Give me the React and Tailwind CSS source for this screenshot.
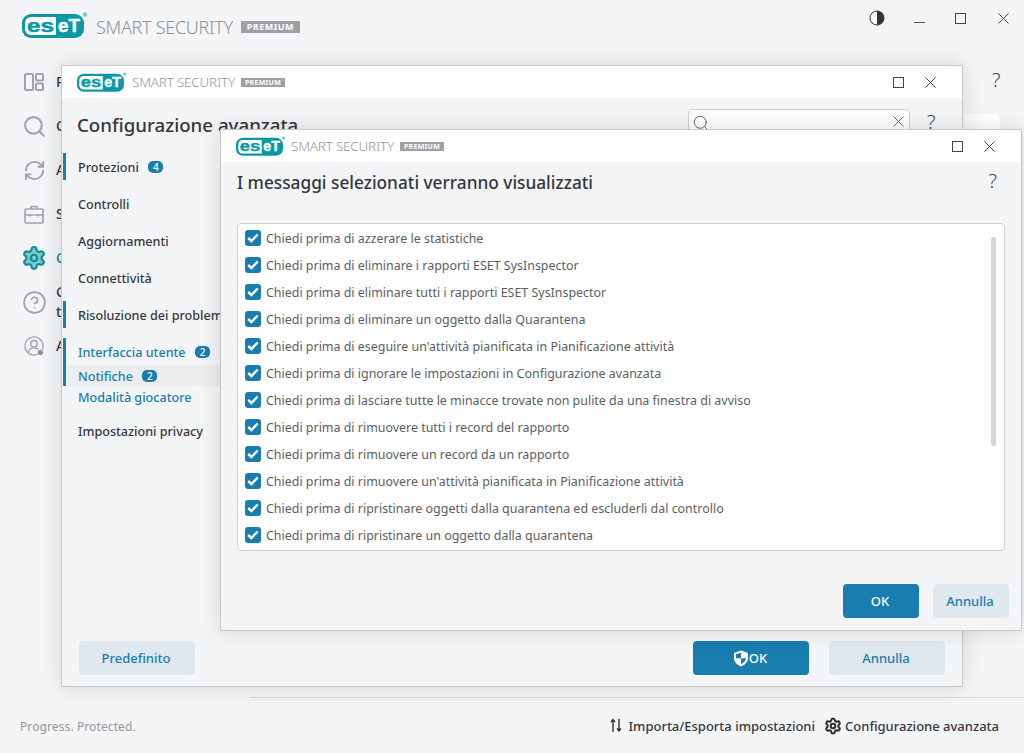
import { RefreshCw, Search, CircleHelp, Settings } from 'lucide-react';

const TEAL = '#0a99a3';

const messages = [
  'Chiedi prima di azzerare le statistiche',
  'Chiedi prima di eliminare i rapporti ESET SysInspector',
  'Chiedi prima di eliminare tutti i rapporti ESET SysInspector',
  'Chiedi prima di eliminare un oggetto dalla Quarantena',
  "Chiedi prima di eseguire un'attività pianificata in Pianificazione attività",
  'Chiedi prima di ignorare le impostazioni in Configurazione avanzata',
  'Chiedi prima di lasciare tutte le minacce trovate non pulite da una finestra di avviso',
  'Chiedi prima di rimuovere tutti i record del rapporto',
  'Chiedi prima di rimuovere un record da un rapporto',
  "Chiedi prima di rimuovere un'attività pianificata in Pianificazione attività",
  'Chiedi prima di ripristinare oggetti dalla quarantena ed escluderli dal controllo',
  'Chiedi prima di ripristinare un oggetto dalla quarantena',
];

function EsetLogo({ className }) {
  return (
    <svg viewBox="0 0 66 26" className={className}>
      <rect x="0" y="2" width="62" height="24" rx="9" fill={TEAL} />
      <path d="M9 5h25v18H9a6 6 0 0 1-6-6v-6a6 6 0 0 1 6-6z" fill="#fff" />
      <text x="5" y="20" fontFamily="Liberation Sans, sans-serif" fontWeight="700" fontSize="19" fill={TEAL} stroke={TEAL} strokeWidth="0.5" textLength="27" lengthAdjust="spacingAndGlyphs">es</text>
      <text x="36" y="20" fontFamily="Liberation Sans, sans-serif" fontWeight="700" fontSize="19" fill="#fff" stroke="#fff" strokeWidth="0.5" textLength="22" lengthAdjust="spacingAndGlyphs">eT</text>
      <circle cx="63" cy="2.5" r="2.2" fill="#7cc4c9" />
    </svg>
  );
}

function MaxIcon() {
  return <div className="w-[11px] h-[11px] border border-[#444]" />;
}

function CloseIcon({ color = '#444' }) {
  return (
    <svg width="11" height="11" viewBox="0 0 11 11" stroke={color} fill="none">
      <path d="M.5.5l10 10M10.5.5l-10 10" />
    </svg>
  );
}

function TitleBar() {
  return (
    <div className="h-[32px] shrink-0 bg-white flex items-center pl-[15px] pr-[26px]">
      <EsetLogo className="w-[50px] h-[20px] -mt-[1px]" />
      <span className="ml-[5px] text-[13.5px] font-light tracking-[-0.2px] text-[#93979c]">SMART SECURITY</span>
      <span className="ml-[6px] h-[9px] w-[44px] bg-[#9da1a6] text-white text-[7px] leading-[9px] font-bold text-center tracking-[0.3px]">PREMIUM</span>
      <div className="ml-auto flex items-center gap-[21px]">
        <MaxIcon />
        <CloseIcon />
      </div>
    </div>
  );
}

function Badge({ n }) {
  return (
    <span className="inline-block w-[15px] h-[12px] -mt-[3px] rounded-[5px] bg-[#1a7db0] text-white text-[10px] leading-[12px] text-center font-medium">{n}</span>
  );
}

function NavItem({ label, badge, marked, blue, active, h = 'h-[27px]', className = '' }) {
  return (
    <div className={`${h} ${className} border-l-[3px] ${marked ? 'border-[#1a7db0]' : 'border-transparent'} ${active ? 'bg-[#ecedef]' : ''} pl-[12px] pt-[4px] flex items-center gap-[9.5px] text-[12.6px] font-medium whitespace-nowrap ${blue ? 'text-[#1a7db0]' : 'text-[#35393f]'}`}>
      {label}
      {badge && <Badge n={badge} />}
    </div>
  );
}

function Button({ primary, className = '', children }) {
  return (
    <button className={`h-[34px] rounded-[4px] flex items-center justify-center pt-[2px] pr-[2px] text-[13px] font-medium ${primary ? 'bg-[#1a7db0] text-white' : 'bg-[#dfe8ef] text-[#1a7db0]'} ${className}`}>
      {children}
    </button>
  );
}

function SideRow({ label, icon, teal }) {
  return (
    <div className="h-[44px] flex items-center">
      <div className="w-[20px] h-[20px] flex items-center justify-center">{icon}</div>
      <span className={`ml-[12px] w-[150px] text-[14px] leading-[20px] font-medium ${teal ? 'text-[#0a8f99]' : 'text-[#35393f]'}`}>{label}</span>
    </div>
  );
}

export default function App() {
  return (
    <div className="relative w-[1024px] h-[753px] overflow-hidden bg-[#f4f5f7] font-['Noto_Sans',sans-serif]">
      {/* main window header */}
      <div className="h-[60px] flex items-start pt-[14px] pl-[22px] pr-[15px]">
        <EsetLogo className="w-[66px] h-[26px] -mt-[2px]" />
        <span className="ml-[8px] text-[18px] leading-[26px] font-light tracking-[-0.3px] text-[#8f9398]">SMART SECURITY</span>
        <span className="ml-[8px] mt-[7px] h-[12px] w-[59px] bg-[#9da1a6] text-white text-[9px] leading-[12px] font-bold text-center tracking-[0.5px]">PREMIUM</span>
        <div className="ml-auto flex items-center h-[14px] -mt-[3px]">
          <svg width="16" height="16" viewBox="0 0 16 16">
            <circle cx="8" cy="8" r="7" fill="none" stroke="#333" />
            <path d="M8 1a7 7 0 0 1 0 14z" fill="#333" />
          </svg>
          <div className="ml-[29px] mt-[8px] w-[11px] border-t border-[#555]" />
          <div className="ml-[30px]"><MaxIcon /></div>
          <div className="ml-[32px]"><CloseIcon /></div>
        </div>
      </div>

      {/* main sidebar */}
      <div className="pl-[24px]">
        <SideRow
          label="Panoramica"
          icon={
            <svg width="20" height="18" viewBox="0 0 20 18" fill="none" stroke="#a0a3a6" strokeWidth="2">
              <rect x="1" y="1" width="8" height="16" rx="1" />
              <rect x="12" y="1" width="7" height="6.5" rx="1" />
              <rect x="12" y="10.5" width="7" height="6.5" rx="1" />
            </svg>
          }
        />
        <SideRow label="Controllo computer" icon={<Search size={25} color="#a0a3a6" strokeWidth={2} className="shrink-0" />} />
        <SideRow label="Aggiornamento" icon={<RefreshCw size={23} color="#a0a3a6" strokeWidth={2} className="shrink-0" />} />
        <SideRow
          label="Strumenti"
          icon={
            <svg width="20" height="19" viewBox="0 0 20 19" fill="none" stroke="#a0a3a6" strokeWidth="1.6">
              <rect x="1" y="4" width="18" height="14" rx="1" />
              <path d="M7 4V1.500h6V4M1 10h18M6 9v2.500M14 9v2.500" />
            </svg>
          }
        />
        <SideRow teal label="Configurazione" icon={<Settings size={26} color="#0a8f99" fill="#7cc8cc" strokeWidth={2} className="shrink-0" />} />
        <SideRow label="Guida e supporto tecnico" icon={<CircleHelp size={25} color="#a0a3a6" strokeWidth={1.6} className="shrink-0" />} />
        <SideRow
          label="Account"
          icon={
            <svg width="22" height="22" viewBox="0 0 22 22" fill="none" stroke="#a0a3a6" strokeWidth="1.5">
              <circle cx="11" cy="11" r="10" />
              <circle cx="11" cy="8.500" r="3.500" />
              <path d="M4.500 18c1-3.500 3.500-5 6.500-5s5 1 6 3" />
              <circle cx="18" cy="18" r="3.500" fill="#8f9296" stroke="#f4f5f7" strokeWidth="1" />
            </svg>
          }
        />
      </div>

      {/* main window content peeking out */}
      <span className="absolute left-[992px] top-[67px] text-[20px] leading-[26px] font-light text-[#444a52]">?</span>
      <div className="absolute left-[950px] top-[114px] w-[50px] h-[60px] rounded-[5px] bg-white" />

      {/* main footer */}
      <div className="absolute left-[250px] right-0 top-[697px] border-t border-[#d6d7d9]" />
      <div className="absolute left-0 right-0 top-[699px] h-[55px] flex items-center pl-[20px] pr-[25px]">
        <span className="text-[12px] tracking-[0.1px] text-[#94979b]">Progress. Protected.</span>
        <div className="ml-auto flex items-center text-[13px] font-medium text-[#35393f]">
          <svg width="12" height="15" viewBox="0 0 12 15" fill="none" stroke="#333" strokeWidth="1.400" className="-mt-[2px]">
            <path d="M3 14V2M1 4L3 1.500 5 4M9 1v12M7 10.500L9 13l2-2.500" />
          </svg>
          <span className="ml-[6px]">Importa/Esporta impostazioni</span>
          <Settings size={18} color="#333" strokeWidth={2.8} className="ml-[9px] -mt-[2px]" />
          <span className="ml-[3px]">Configurazione avanzata</span>
        </div>
      </div>

      {/* Configurazione avanzata window */}
      <div className="absolute left-[61px] top-[65px] w-[902px] h-[622px] flex flex-col bg-[#f4f5f7] border border-[#c8c8c8] shadow-[0_0_22px_rgba(0,0,0,0.13)]">
        <TitleBar />
        <div className="h-[53px] shrink-0 relative flex items-start">
          <h1 className="ml-[15px] mt-[13px] text-[18.7px] leading-[28px] font-medium text-[#33373d]">Configurazione avanzata</h1>
          <div className="absolute left-[626px] top-[11px] w-[222px] h-[30px] bg-white border border-[#cfd0d2] rounded-[4px] flex items-start justify-between pt-[4px] pl-[3px] pr-[5px]">
            <Search size={18} color="#666" strokeWidth={1.3} />
            <div className="mt-[2px]"><CloseIcon color="#666" /></div>
          </div>
          <span className="absolute left-[865px] top-[11px] text-[20px] leading-[26px] font-light text-[#444a52]">?</span>
        </div>
        <div className="flex-1 pt-[2px] pl-[1px]">
          <div className="flex flex-col gap-[10px]">
            <NavItem label="Protezioni" badge="4" marked />
            <NavItem label="Controlli" />
            <NavItem label="Aggiornamenti" />
            <NavItem label="Connettività" />
            <NavItem label="Risoluzione dei problemi" marked />
            <div className="flex flex-col">
              <NavItem label="Interfaccia utente" badge="2" marked blue />
              <NavItem label="Notifiche" badge="2" marked blue active h="h-[21px]" />
              <NavItem label="Modalità giocatore" blue h="h-[21px]" />
            </div>
            <NavItem label="Impostazioni privacy" />
          </div>
        </div>
        <div className="shrink-0 flex items-center pb-[11px] pl-[17px] pr-[17px]">
          <Button className="w-[116px]">Predefinito</Button>
          <Button primary className="ml-auto w-[116px] gap-[0px]">
            <svg width="16" height="17" viewBox="0 0 15 16" className="-mt-[2px]">
              <path d="M7.500 .5L14 2.800v5c0 3.600-2.800 6.200-6.500 7.700C3.800 14 1 11.400 1 7.800v-5z" fill="#fff" />
              <path d="M7.500 2.500v5.300H2.800V3.900zM7.500 7.800h4.700c-.2 2.500-2.200 4.300-4.700 5.500z" fill="#1a7db0" />
            </svg>
            OK
          </Button>
          <Button className="ml-[20px] w-[116px]">Annulla</Button>
        </div>
      </div>

      {/* Messaggi dialog */}
      <div className="absolute left-[220px] top-[129px] w-[802px] h-[502px] flex flex-col bg-[#f4f5f7] border border-[#c8c8c8] shadow-[0_0_22px_rgba(0,0,0,0.13)]">
        <TitleBar />
        <div className="h-[61px] shrink-0 flex items-start pl-[16px] pr-[24px]">
          <h2 className="mt-[8px] text-[17.25px] leading-[26px] font-medium text-[#33373d]">I messaggi selezionati verranno visualizzati</h2>
          <span className="ml-auto mt-[6px] text-[20px] leading-[26px] font-light text-[#444a52]">?</span>
        </div>
        <div className="relative ml-[16px] w-[768px] h-[328px] shrink-0 bg-white border border-[#cfd0d2] rounded-[4px] overflow-hidden pt-[1px] pl-[7px]">
          {messages.map((m) => (
            <div key={m} className="h-[27px] flex items-center gap-[5px] text-[12.45px] text-[#5a5e64] whitespace-nowrap">
              <span className="w-[16px] h-[16px] mb-[2px] rounded-[3px] bg-[#1a7db0] flex items-center justify-center">
                <svg width="12" height="10" viewBox="0 0 12 10" fill="none" stroke="#fff" strokeWidth="2.400">
                  <path d="M1.200 5l3.200 3 6.300-6.500" />
                </svg>
              </span>
              <span className="mt-[2px]">{m}</span>
            </div>
          ))}
          <div className="absolute left-[753px] top-[13px] w-[5px] h-[209px] rounded-full bg-[#d4d5d7]" />
        </div>
        <div className="mt-auto flex justify-end gap-[14px] pb-[12px] pr-[12px]">
          <Button primary className="w-[76px]">OK</Button>
          <Button className="w-[76px]">Annulla</Button>
        </div>
      </div>
    </div>
  );
}
